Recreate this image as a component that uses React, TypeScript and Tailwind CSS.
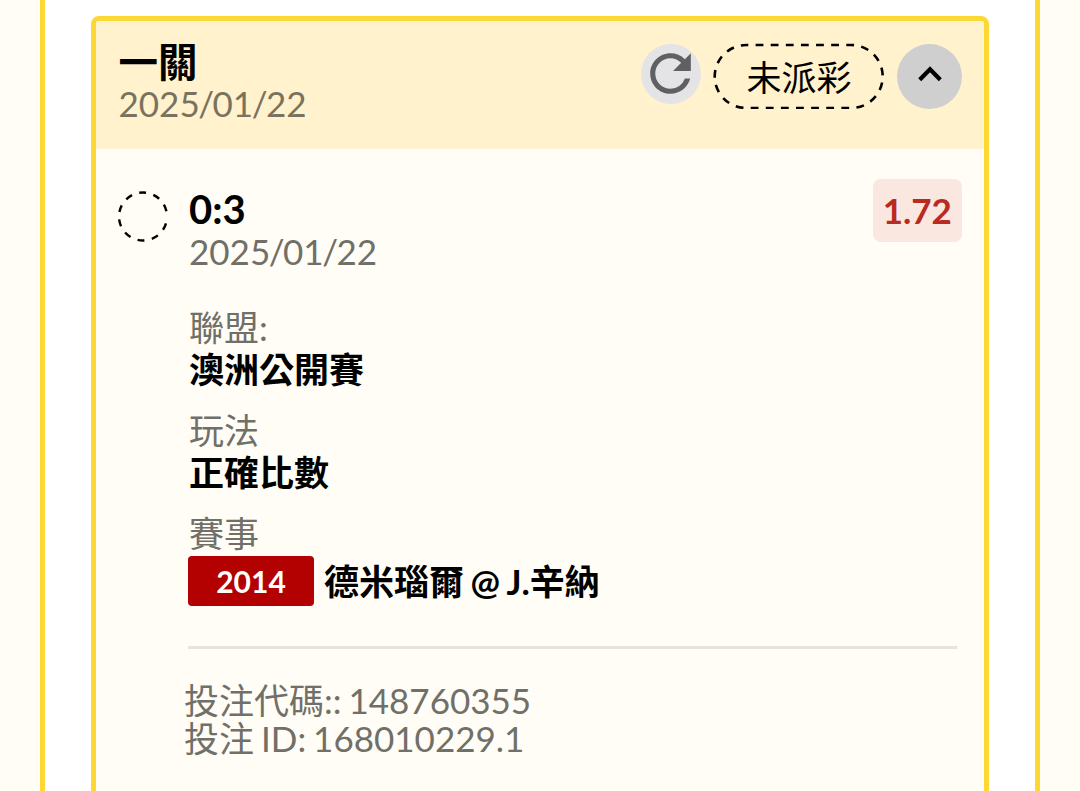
import type { ReactNode } from 'react';
import { MdRefresh } from 'react-icons/md';

interface Ticket {
  title: string;
  date: string;
  status: string;
  pick: string;
  pickDate: string;
  odds: string;
  league: string;
  market: string;
  matchNo: string;
  match: string;
  code: string;
  id: string;
}

const ticket: Ticket = {
  title: '一關',
  date: '2025/01/22',
  status: '未派彩',
  pick: '0:3',
  pickDate: '2025/01/22',
  odds: '1.72',
  league: '澳洲公開賽',
  market: '正確比數',
  matchNo: '2014',
  match: '德米瑙爾 @ J.辛納',
  code: '148760355',
  id: '168010229.1'
};

export default function App() {
  return (
    <div className="h-[791px] overflow-hidden bg-[#fffdf5] pl-10 font-[Lato,'Noto_Sans_CJK_TC',sans-serif] text-[35px] leading-[42px] text-black [word-spacing:-2px]">
      <div className="h-full w-[1000px] border-x-[5px] border-[#fdd835] bg-white px-[46px] pt-4">
        <div className="h-[900px] w-[898px] overflow-hidden rounded-lg border-[5px] border-[#fdd835] bg-[#fffdf5]">
          <TicketHeader ticket={ticket} />
          <TicketBody ticket={ticket} />
        </div>
      </div>
    </div>
  );
}

function TicketHeader({ ticket }: { ticket: Ticket }) {
  return (
    <div className="flex h-32 items-start justify-between bg-[#fff2cc] pl-[22.5px] pr-[22px] pt-5">
      <div>
        <h2 className="text-[39.5px] leading-[41px] font-bold">{ticket.title}</h2>
        <p className="text-[#79725f]">
          <DateText value={ticket.date} />
        </p>
      </div>
      <div className="flex items-start pt-0.5">
        <button className="mt-px mr-3 flex size-[60px] items-center justify-center rounded-full bg-[#e4e4e6] pb-px text-[#5f6062]">
          <MdRefresh className="mr-px size-[61px] shrink-0" />
        </button>
        <StatusBadge label={ticket.status} />
        <button className="mt-px ml-3 flex size-[65px] items-center justify-center rounded-full bg-[#cfcfcf] pb-[5px]">
          <svg width="26" height="18" viewBox="0 0 26 18" fill="none">
            <path d="M2.7 14.8 13 4.2 23.3 14.8" stroke="currentColor" strokeWidth="4.2" />
          </svg>
        </button>
      </div>
    </div>
  );
}

function StatusBadge({ label }: { label: string }) {
  return (
    <div className="relative flex h-[65px] w-[172px] items-center justify-center pt-[3px]">
      <svg className="absolute inset-0" width="172" height="66" viewBox="0 0 172 66" fill="none">
        <rect x="1.7" y="2" width="168" height="63" rx="31.5" stroke="currentColor" strokeWidth="2.6" strokeDasharray="7.8 7.31" strokeDashoffset="5.7" />
      </svg>
      {label}
    </div>
  );
}

function TicketBody({ ticket }: { ticket: Ticket }) {
  return (
    <div className="flex pl-[22px] pr-[22px] pt-[30px]">
      <svg className="mt-3 mr-[19px] shrink-0" width="51" height="51" viewBox="0 0 51 51" fill="none">
        <circle cx="25" cy="25.5" r="24" stroke="currentColor" strokeWidth="2.4" strokeDasharray="7 7.5" strokeDashoffset="-7" />
      </svg>
      <div className="flex-1">
        <div className="flex items-start justify-between">
          <div className="pt-[9px] pl-px">
            <h3 className="text-[40px] font-bold">{ticket.pick}</h3>
            <p className="text-[#706f68]">
              <DateText value={ticket.pickDate} />
            </p>
          </div>
          <span className="flex h-[62.5px] w-[89.5px] items-center justify-center rounded-lg bg-[#f9e7e0] font-bold text-[#b92a20]">
            {ticket.odds}
          </span>
        </div>
        <div className="mt-[34px] mr-[5px] space-y-[19px] border-b-[3px] border-[#e5e5de] pb-10">
          <Field label="聯盟:">{ticket.league}</Field>
          <Field label="玩法">{ticket.market}</Field>
          <Field label="賽事">
            <span className="-ml-px mt-0.5 flex items-center">
              <span className="mr-2.5 flex h-[50px] w-[126px] items-center justify-center rounded bg-[#b30000] text-[30px] text-white">
                {ticket.matchNo}
              </span>
              {ticket.match}
            </span>
          </Field>
        </div>
        <div className="mt-8 -ml-1 leading-[38px] text-[#706f68]">
          <p>投注代碼:: {ticket.code}</p>
          <p>投注 ID: {ticket.id}</p>
        </div>
      </div>
    </div>
  );
}

// Slashes sit tight against the digits
function DateText({ value }: { value: string }) {
  const [year, month, day] = value.split('/');
  return (
    <>
      {year}
      <span className="-mx-[1.5px]">/</span>
      {month}
      <span className="-mx-[1.5px]">/</span>
      {day}
    </>
  );
}

function Field({ label, children }: { label: string; children: ReactNode }) {
  return (
    <div className="pl-px">
      <div className="text-[#706f68]">{label}</div>
      <div className="font-bold">{children}</div>
    </div>
  );
}
